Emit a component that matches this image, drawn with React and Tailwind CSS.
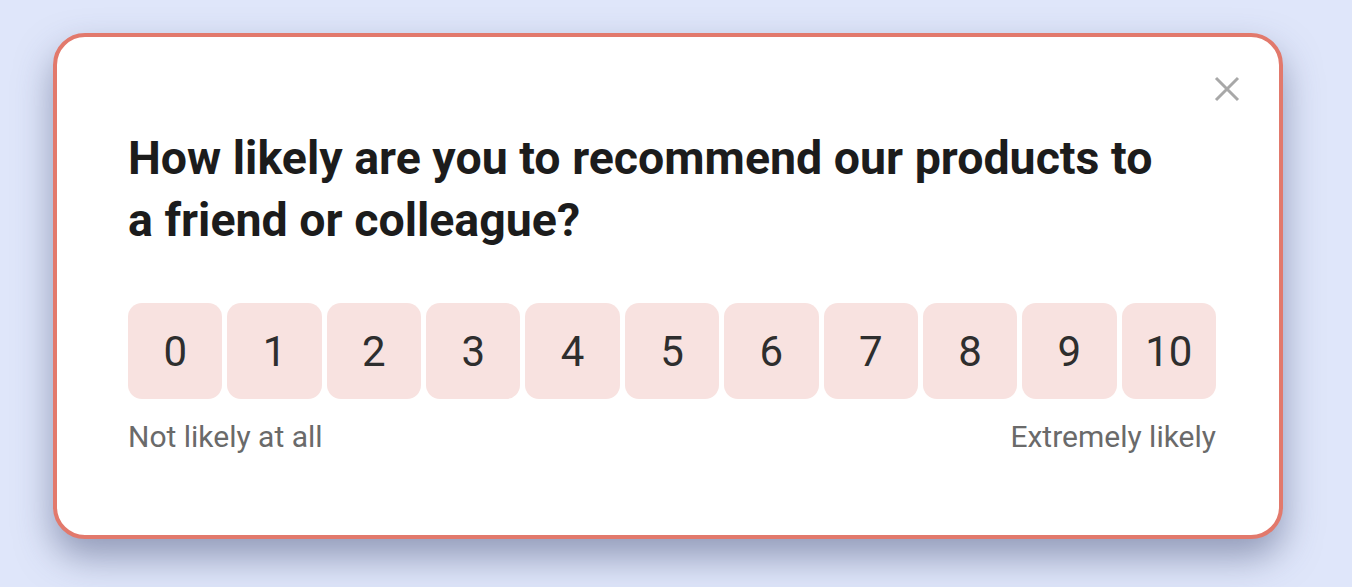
import React from "react";

const scores = [0, 1, 2, 3, 4, 5, 6, 7, 8, 9, 10];

const App = () => {
  return (
    <div
      className="w-[1352px] h-[587px] bg-[#dfe6fa] pt-[33px] pl-[53px] overflow-hidden"
      style={{ fontFamily: "Roboto, 'Liberation Sans', sans-serif" }}
    >
      <div className="relative w-[1230px] h-[506px] bg-white border-4 border-[#e2796c] rounded-[32px] shadow-[0_18px_36px_rgba(70,80,120,0.5)] pt-[90px] pl-[71px]">
        <button className="absolute top-[37px] right-[37px] w-[30px] h-[30px] flex items-center justify-center text-[#a8a8a8]">
          <svg width="26" height="26" viewBox="0 0 26 26" fill="none" stroke="currentColor" strokeWidth="3">
            <path d="M2 2 L24 24 M24 2 L2 24" />
          </svg>
        </button>
        <h2 className="w-[1050px] text-[46.5px] leading-[62px] font-bold text-[#1c1c1c]">
          How likely are you to recommend our products to a friend or colleague?
        </h2>
        <div className="w-[1088px] mt-[52px] flex gap-[5px]">
          {scores.map((n) => (
            <button
              key={n}
              className="flex-1 h-[96px] rounded-[14px] bg-[#f8e2e0] text-[42px] text-[#2e2e2e] flex items-center justify-center"
            >
              {n}
            </button>
          ))}
        </div>
        <div className="w-[1088px] mt-[20px] flex justify-between text-[30px] leading-[36px] text-[#6a6a6a]">
          <span>Not likely at all</span>
          <span>Extremely likely</span>
        </div>
      </div>
    </div>
  );
};

export default App;
